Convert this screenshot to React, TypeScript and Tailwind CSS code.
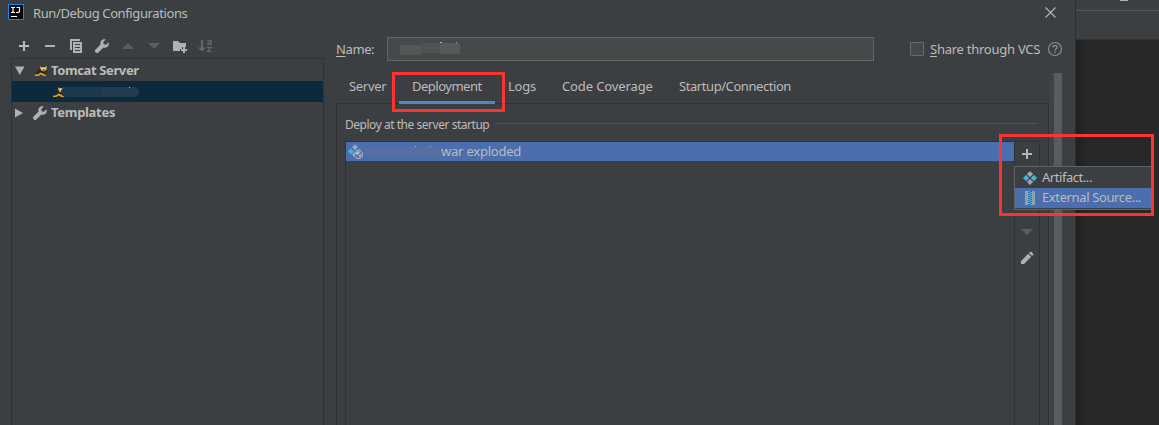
import React from 'react';

const Plus = () => (
  <svg width="16" height="16" viewBox="0 0 16 16" fill="#b4b6b8">
    <path d="M7 3h2v4h4v2H9v4H7V9H3V7h4z" />
  </svg>
);

const Wrench = () => (
  <svg width="16" height="16" viewBox="0 0 16 16" fill="#afb1b3">
    <path d="M14.6 4.2 12 6.7 9.7 6.300 9.300 4 11.800 1.400C10 .8 8 1.400 7 3c-.7 1.100-.8 2.300-.4 3.500L1.400 11.700c-.7.7-.7 1.700 0 2.400l.5.5c.7.7 1.700.7 2.400 0l5.200-5.200c1.200.4 2.500.3 3.600-.4 1.500-1 2.100-3 1.500-4.800z" />
  </svg>
);

const Triangle = ({ dir, color }: { dir: 'up' | 'down' | 'right' | 'expanded'; color: string }) => (
  <svg width="16" height="16" viewBox="0 0 16 16" fill={color}>
    {dir === 'up' && <path d="M2 11 8 5l6 6z" />}
    {dir === 'down' && <path d="M2 5h12l-6 6z" />}
    {dir === 'right' && <path d="M4 3.500v9l8-4.500z" />}
    {dir === 'expanded' && <path d="M4 3.500h9.500L8.750 12z" />}
  </svg>
);

const Tomcat = () => (
  <svg width="14" height="12" viewBox="0 0 14 12">
    <path d="M1 7.500l4-2 1-4h6.500l.5 5-2 2 1 2.500H8L5 9z" fill="#2b2619" />
    <path d="M5.800 1l1.500 1h3.500L12.800.8l-.2 4-2 1.800-2.800-.6-1.500-2z" fill="#c9ab5c" />
    <path d="M.8 9.800l3.500-.6L6.500 7.500l2.500 1 2.800 1.500.4 1.200L9 10.800 6.500 9.600 4.500 11H1z" fill="#e0a61b" />
    <path d="M8 3h1v1H8zM10.500 3h1v1h-1z" fill="#fff3c0" />
    <path d="M9 4.800h1.500v1H9z" fill="#3a2d12" />
  </svg>
);

const Copy = () => (
  <svg width="16" height="16" viewBox="0 0 16 16" fill="#afb1b3">
    <path d="M2 1h10v2H4v9H2z" />
    <path fillRule="evenodd" d="M5 4h9v11H5zM7 6v1h5V6zM7 9v1h5V9zM7 12v1h5v-1z" />
  </svg>
);

const FolderAdd = () => (
  <svg width="16" height="16" viewBox="0 0 16 16" fill="#afb1b3">
    <path d="M1 3h5l2 2h6v4h-4v2H8v2H1z" />
    <path d="M11 9h2v2h2v2h-2v2h-2v-2H9v-2h2z" />
  </svg>
);

const SortAz = () => (
  <svg width="16" height="16" viewBox="0 0 16 16" fill="none" stroke="#65686a">
    <path d="M4 2v9" strokeWidth="2" />
    <path d="M0 9.500h8L4 13.500z" fill="#65686a" stroke="none" />
    <path d="M9.500 2.500h3.500v4h-3V4.500h3M9 9.500h4l-3.500 4H13.500" strokeWidth="1.200" />
  </svg>
);

const Artifact = () => (
  <svg width="14" height="14" viewBox="0 0 14 14">
    <path d="M7 .2l2.900 2.900L7 6 4.100 3.100zM7 8l2.900 2.900L7 13.800l-2.900-2.900z" fill="#9aa7b0" stroke="#9aa7b0" strokeWidth=".4" />
    <path d="M3.100 4.100L6 7 3.100 9.900.2 7zM10.900 4.100L13.800 7l-2.900 2.900L8 7z" fill="#40b6e0" stroke="#40b6e0" strokeWidth=".4" />
  </svg>
);

const Exploded = () => (
  <svg width="16" height="16" viewBox="0 0 16 16">
    <path d="M7 .3l3 3-3 3-3-3zM5.500 8.500l1.200 4.800L4 11z" fill="#9aa7b0" />
    <path d="M3 4.200l3 3-3 3-3-3zM9.500 5l1.500-.8 2.500 1.500z" fill="#40b6e0" />
    <circle cx="10.500" cy="10.500" r="4.200" fill="#5975a9" stroke="#a9b5c5" strokeWidth="1" />
    <path d="M7 9l3-2 2 1-1.500 2.500L8.500 11zM11 11l2.500-1-.5 2.500-2 1z" fill="#afb9c5" />
  </svg>
);

const Archive = () => (
  <svg width="12" height="14" viewBox="0 0 12 14">
    <path d="M1 0h3v14H1zM8 0h3v14H8z" fill="#929fad" />
    <path d="M4 0h4v14H4z" fill="#3c6e9c" />
    <path d="M5 0v14" stroke="#40b6e0" strokeWidth="2" strokeDasharray="1 1" />
    <path d="M7 1v13" stroke="#40b6e0" strokeWidth="2" strokeDasharray="1 1" />
  </svg>
);

const Pencil = () => (
  <svg width="16" height="16" viewBox="0 0 16 16" fill="#afb1b3">
    <path d="M2 11l7.200-7.200 3 3L5 14H2zM10 3l1-1c.5-.5 1.100-.5 1.600 0L14 3.400c.5.5.5 1.100 0 1.600l-1 1z" />
  </svg>
);

const Cell = ({ children }: { children: React.ReactNode }) => (
  <div className="flex h-6 w-[26px] items-center justify-center">{children}</div>
);

const ToolWindow = () => (
  <div className="flex w-[324px] shrink-0 flex-col">
    <div className="flex h-8 items-center pt-2 pl-[11px]">
      <Cell><Plus /></Cell>
      <Cell>
        <svg width="16" height="16" viewBox="0 0 16 16" fill="#afb1b3"><path d="M3 7h10v2H3z" /></svg>
      </Cell>
      <Cell><Copy /></Cell>
      <Cell><Wrench /></Cell>
      <Cell><Triangle dir="up" color="#5b5d5f" /></Cell>
      <Cell><Triangle dir="down" color="#5b5d5f" /></Cell>
      <Cell><FolderAdd /></Cell>
      <Cell><SortAz /></Cell>
    </div>
    <div className="ml-[11px] flex grow flex-col border border-b-0 border-[#323232] pt-px font-bold">
      <div className="flex h-[21px] items-center">
        <span className="-ml-px w-[23px]"><Triangle dir="expanded" color="#adafb1" /></span>
        <Tomcat />
        <span className="ml-[3px] pb-[2px] tracking-[-0.38px]">Tomcat Server</span>
      </div>
      <div className="flex h-[21px] items-center bg-[#0d293e] pl-10">
        <Tomcat />
        <span className="-ml-[5px] flex h-[10px] w-[78px] overflow-hidden rounded-full">
          <span className="w-10 bg-[#1c384b]" />
          <span className="grow bg-[#223b4d]" />
        </span>
        <span className="-ml-[10px] mb-[9px] h-px w-px bg-[#b5b7b9]" />
      </div>
      <div className="flex h-[21px] items-center">
        <span className="-ml-px w-[21px]"><Triangle dir="right" color="#adafb1" /></span>
        <Wrench />
        <span className="ml-[3px] pb-[2px] tracking-[-0.3px]">Templates</span>
      </div>
    </div>
  </div>
);

const NameRow = () => (
  <div className="flex h-[47px] items-start pt-[11px]">
    <span className="flex h-6 w-[51px] items-center pb-px tracking-[-0.4px]"><span><u className="underline-offset-2">N</u>ame:</span></span>
    <div className="flex h-6 w-[487px] items-center border border-[#646464] bg-[#45494a] pl-3">
      <span className="mt-[2px] h-[10px] w-[21px] bg-[#535758]" />
      <span className="-mt-[2px] h-[10px] w-[19px] bg-[#4e5253]" />
      <span className="-mt-[2px] flex h-[12px] w-5 justify-between border-t border-[#45494a] bg-[#565a5b]">
        <span className="-mt-px h-px w-[2px] bg-[#afb1b3]" />
        <span className="-mt-px mr-[3px] h-px w-px bg-[#afb1b3]" />
      </span>
    </div>
    <div className="ml-9 flex h-6 items-center">
      <span className="h-[14px] w-[14px] rounded-[1px] border border-[#6b6b6b] bg-[#43494a]" />
      <span className="ml-[6px] w-[111px] whitespace-nowrap tracking-[-0.25px]"><u className="underline-offset-2">S</u>hare through VCS</span>
      <svg className="ml-[6px]" width="16" height="16" viewBox="0 0 16 16" fill="none" stroke="#8a8c8e">
        <circle cx="8" cy="8" r="6.500" strokeWidth="1.200" />
        <path d="M5.900 6.500c0-2.700 4.200-2.700 4.200-.2C10.100 7.700 8 7.800 8 9.500M8 10.500v1.400" strokeWidth="1.400" />
      </svg>
    </div>
  </div>
);

const Tabs = () => (
  <div className="flex h-[31px] pl-[13px]">
    <div className="w-[50px] pt-[3px] tracking-[-0.3px]">Server</div>
    <div className="relative w-[96px] border-b-[3px] border-[#4a88c7] pt-[3px] pl-[13px] tracking-[-0.5px]">
      Deployment
      <div className="absolute -top-px -left-[7px] h-10 w-[113px] border-[3px] border-[#fa3434]" />
    </div>
    <div className="w-[54px] pt-[3px] pl-[13px] tracking-[-0.2px]">Logs</div>
    <div className="w-[117px] pt-[3px] pl-[13px] whitespace-nowrap tracking-[-0.12px]">Code Coverage</div>
    <div className="pt-[3px] pl-[13px] tracking-[-0.43px]">Startup/Connection</div>
  </div>
);

const AddMenu = () => (
  <div className="absolute top-[166px] left-[1014px] flex h-[44px] w-[138px] flex-col border border-r-0 border-[#616365] bg-[#3c3f41]">
    <div className="flex h-[21px] items-center pl-2">
      <Artifact />
      <span className="ml-[5px] pb-[2px] tracking-[-0.45px]">Artifact...</span>
    </div>
    <div className="flex h-5 items-center bg-[#4b6eaf] pl-[9px]">
      <Archive />
      <span className="ml-[6px] pb-[2px] whitespace-nowrap tracking-[-0.38px]">External Source...</span>
    </div>
  </div>
);

const DeploymentPanel = () => (
  <div className="-mt-px flex h-[322px] w-[713px] flex-col border border-b-0 border-[#323232] px-2">
    <div className="flex h-[37px] items-start pt-[11px] text-[12px]">
      <span className="w-[144px] leading-[19px] whitespace-nowrap tracking-[-0.47px]">Deploy at the server startup</span>
      <span className="mt-[8px] mr-[3px] ml-[6px] h-px grow bg-[#515355]" />
    </div>
    <div className="flex grow">
      <div className="w-[670px] border border-b-0 border-[#323232]">
        <div className="flex h-[19px] items-center bg-[#4b6eaf] pl-[2px]">
          <Exploded />
          <span className="flex h-[11px] w-[77px] items-start justify-end gap-[14px] rounded-l-full border-t border-[#4b6eaf] bg-[#5570a3] pr-[10px]">
            <span className="-mt-px h-px w-px bg-[#a5b3cc]" />
            <span className="-mt-px h-px w-px bg-[#a5b3cc]" />
          </span>
          <span className="pb-[2px] whitespace-nowrap tracking-[-0.22px]">war exploded</span>
        </div>
      </div>
      <div className="flex w-[25px] flex-col items-center border-t border-r border-[#323232]">
        <span className="mt-1"><Plus /></span>
        <span className="mt-[62px]"><Triangle dir="down" color="#5b5d5f" /></span>
        <span className="mt-[10px]"><Pencil /></span>
      </div>
    </div>
  </div>
);

export default function App() {
  return (
    <div className="relative flex h-[425px] w-[1159px] overflow-hidden bg-[#282828] font-['Noto_Sans',sans-serif] text-[13px] leading-5 text-[#bbbbbb]">
      <div className="flex w-[1076px] shrink-0 flex-col border-r border-[#2d2f30] bg-[#3c3f41]">
        <header className="flex h-[26px] items-center pl-2">
          <div className="mt-[-2px] flex h-4 w-4 flex-col border border-[#1686f5] bg-black pt-[2px] pl-[2px]">
            <svg width="11" height="11" viewBox="0 0 11 11" fill="none" stroke="#fff" strokeWidth="1.200">
              <path d="M0 .5h4M2 .5v5M0 5.500h4M5.500.5H8.500v4l-1 1H5M0 9.500h6" />
            </svg>
          </div>
          <span className="ml-[9px] grow pb-px tracking-[-0.39px]">Run/Debug Configurations</span>
          <svg className="mr-[19px] mb-[2px]" width="11" height="11" viewBox="0 0 11 11" stroke="#b5b7b9" fill="none">
            <path d="M.5.5l10 10M10.500.5l-10 10" strokeWidth="1.100" />
          </svg>
        </header>
        <div className="flex grow">
          <ToolWindow />
          <div className="ml-3 flex grow flex-col">
            <NameRow />
            <div className="flex">
              <div>
                <Tabs />
                <DeploymentPanel />
              </div>
              <div className="flex w-[26px]">
                <span className="w-[5px] bg-[#404345]" />
                <span className="w-2 bg-[#595b5d]" />
              </div>
            </div>
          </div>
        </div>
      </div>
      <div className="flex grow flex-col">
        <div className="flex h-[10px] bg-[#3c3f41] pl-11"><span className="h-px w-2 bg-[#afb1b3]" /></div>
        <div className="h-[30px] border-t border-b border-t-[#555759] border-b-[#323232] bg-[#3c3f41]" />
        <div className="w-3 grow bg-linear-to-r from-[#202020] to-[#282828]" />
      </div>
      <AddMenu />
      <div className="absolute top-[134px] left-[999px] h-[82px] w-[155px] border-[3px] border-[#fa3434]" />
    </div>
  );
}
